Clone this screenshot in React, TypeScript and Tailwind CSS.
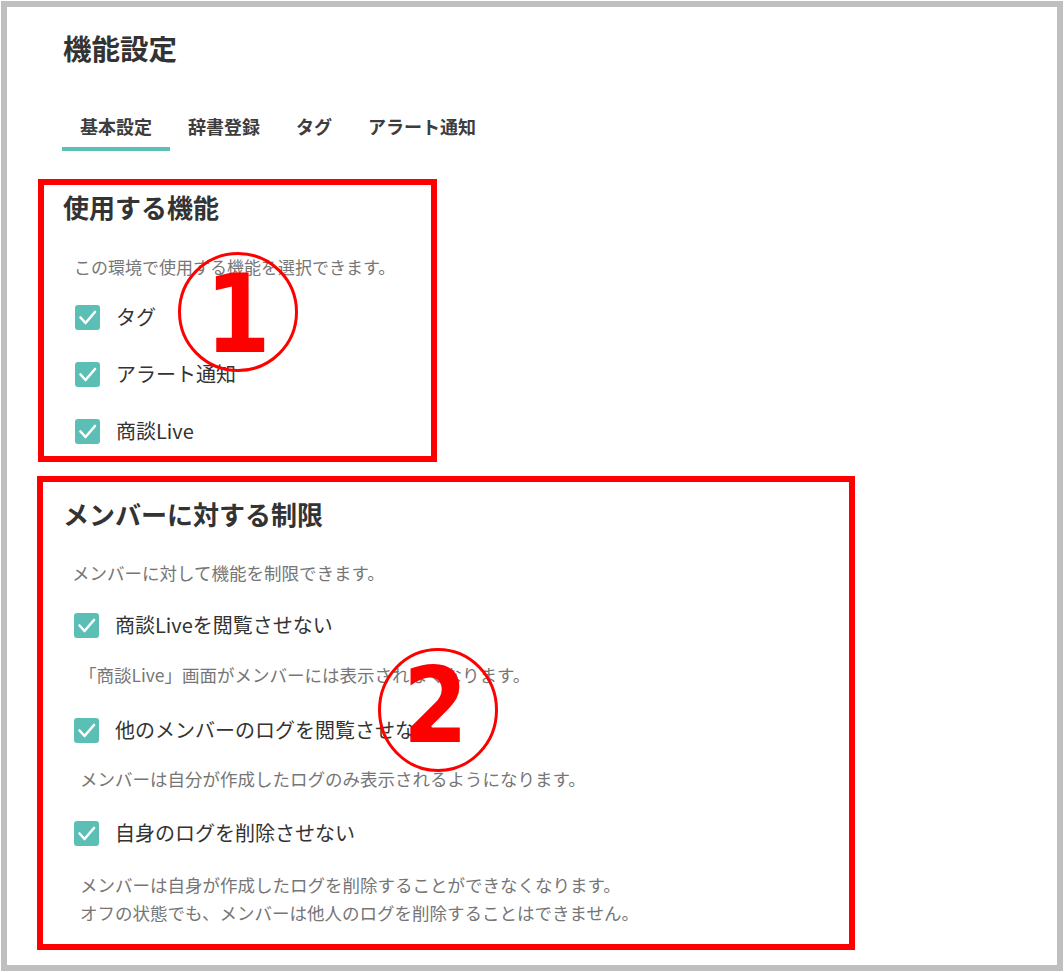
const jp = "font-['Noto_Sans_CJK_JP','Noto_Sans',sans-serif]";

function CheckBox() {
  return (
    <span className="flex h-[25px] w-[25px] shrink-0 items-center justify-center rounded-[3px] bg-[#5bbfb6]">
      <svg width="25" height="25" viewBox="0 0 25 25" fill="none">
        <polyline
          points="5.5,12.5 10.5,18 20,7"
          stroke="#ffffff"
          strokeWidth="2.6"
          strokeLinecap="round"
          strokeLinejoin="round"
        />
      </svg>
    </span>
  );
}

function CheckRow({ label, className }: { label: string; className: string }) {
  return (
    <div className={`flex h-[36px] items-center gap-4 ${className}`}>
      <CheckBox />
      <span className="text-[20px] leading-[36px] text-[#333333]">{label}</span>
    </div>
  );
}

function Desc({ children, className }: { children: React.ReactNode; className: string }) {
  return <p className={`leading-[28px] text-[#767676] ${className}`}>{children}</p>;
}

const tabs = ["基本設定", "辞書登録", "タグ", "アラート通知"];

export default function App() {
  return (
    <div className={`relative h-[972px] w-[1064px] bg-white p-px ${jp}`}>
      <div className="h-full border-[6px] border-[#bfbfbf]">
        <h1 className="pl-[56px] pt-[21px] text-[28.5px] font-bold leading-[40px] text-[#333333]">機能設定</h1>

        <div className="ml-[55px] mt-[46px] flex">
          {tabs.map((t, i) => (
            <div
              key={t}
              className={`border-b-4 px-[18px] pb-[9px] text-[18px] font-bold leading-[24px] text-[#3d3d3d] ${
                i === 0 ? "border-[#5bbfb6]" : "border-transparent"
              }`}
            >
              {t}
            </div>
          ))}
        </div>

        <section className="ml-[31px] mt-[28px] w-[399px] border-[6px] border-[#ff0000] pb-[7px]">
          <h2 className="pl-[19px] pt-[4px] text-[26px] font-bold leading-[36px] text-[#333333]">使用する機能</h2>
          <Desc className="mt-[28px] pl-[30px] text-[17px]">この環境で使用する機能を選択できます。</Desc>
          <div className="pl-[31px]">
            <CheckRow label="タグ" className="mt-[18px]" />
            <CheckRow label="アラート通知" className="mt-[21px]" />
            <CheckRow label="商談Live" className="mt-[21px]" />
          </div>
        </section>

        <section className="ml-[30px] mt-[14px] w-[818px] border-[6px] border-[#ff0000] pb-[17px]">
          <h2 className="pl-[20px] pt-[14px] text-[26px] font-bold leading-[36px] text-[#333333]">メンバーに対する制限</h2>
          <Desc className="mt-[27px] pl-[29px] text-[17.5px]">メンバーに対して機能を制限できます。</Desc>
          <div className="pl-[31px]">
            <CheckRow label="商談Liveを閲覧させない" className="mt-[20px]" />
          </div>
          <Desc className="mt-[18px] pl-[36px] text-[17.5px]">「商談Live」画面がメンバーには表示されなくなります。</Desc>
          <div className="pl-[31px]">
            <CheckRow label="他のメンバーのログを閲覧させない" className="mt-[23px]" />
          </div>
          <Desc className="mt-[17px] pl-[37px] text-[17.5px]">メンバーは自分が作成したログのみ表示されるようになります。</Desc>
          <div className="pl-[31px]">
            <CheckRow label="自身のログを削除させない" className="mt-[22px]" />
          </div>
          <Desc className="mt-[20px] pl-[37px] text-[17.5px]">
            メンバーは自身が作成したログを削除することができなくなります。
            <br />
            オフの状態でも、メンバーは他人のログを削除することはできません。
          </Desc>
        </section>
      </div>

      <svg className="absolute left-[176px] top-[250px]" width="124" height="124" viewBox="0 0 124 124">
        <ellipse cx="62" cy="62" rx="58.5" ry="58.5" fill="none" stroke="#ff0000" strokeWidth="3" />
        <text
          x="0"
          y="102"
          transform="translate(62 0) scale(0.87 1)"
          textAnchor="middle"
          fontSize="108"
          fontWeight="bold"
          fill="#ff0000"
          fontFamily="'DejaVu Sans', sans-serif"
        >
          1
        </text>
      </svg>
      <svg className="absolute left-[376px] top-[646px]" width="124" height="128" viewBox="0 0 124 128">
        <ellipse cx="62" cy="64" rx="58.5" ry="60.5" fill="none" stroke="#ff0000" strokeWidth="3" />
        <text
          x="0"
          y="96"
          transform="translate(59.5 0) scale(0.88 1)"
          textAnchor="middle"
          fontSize="106"
          fontWeight="bold"
          fill="#ff0000"
          fontFamily="'DejaVu Sans', sans-serif"
        >
          2
        </text>
      </svg>
    </div>
  );
}
